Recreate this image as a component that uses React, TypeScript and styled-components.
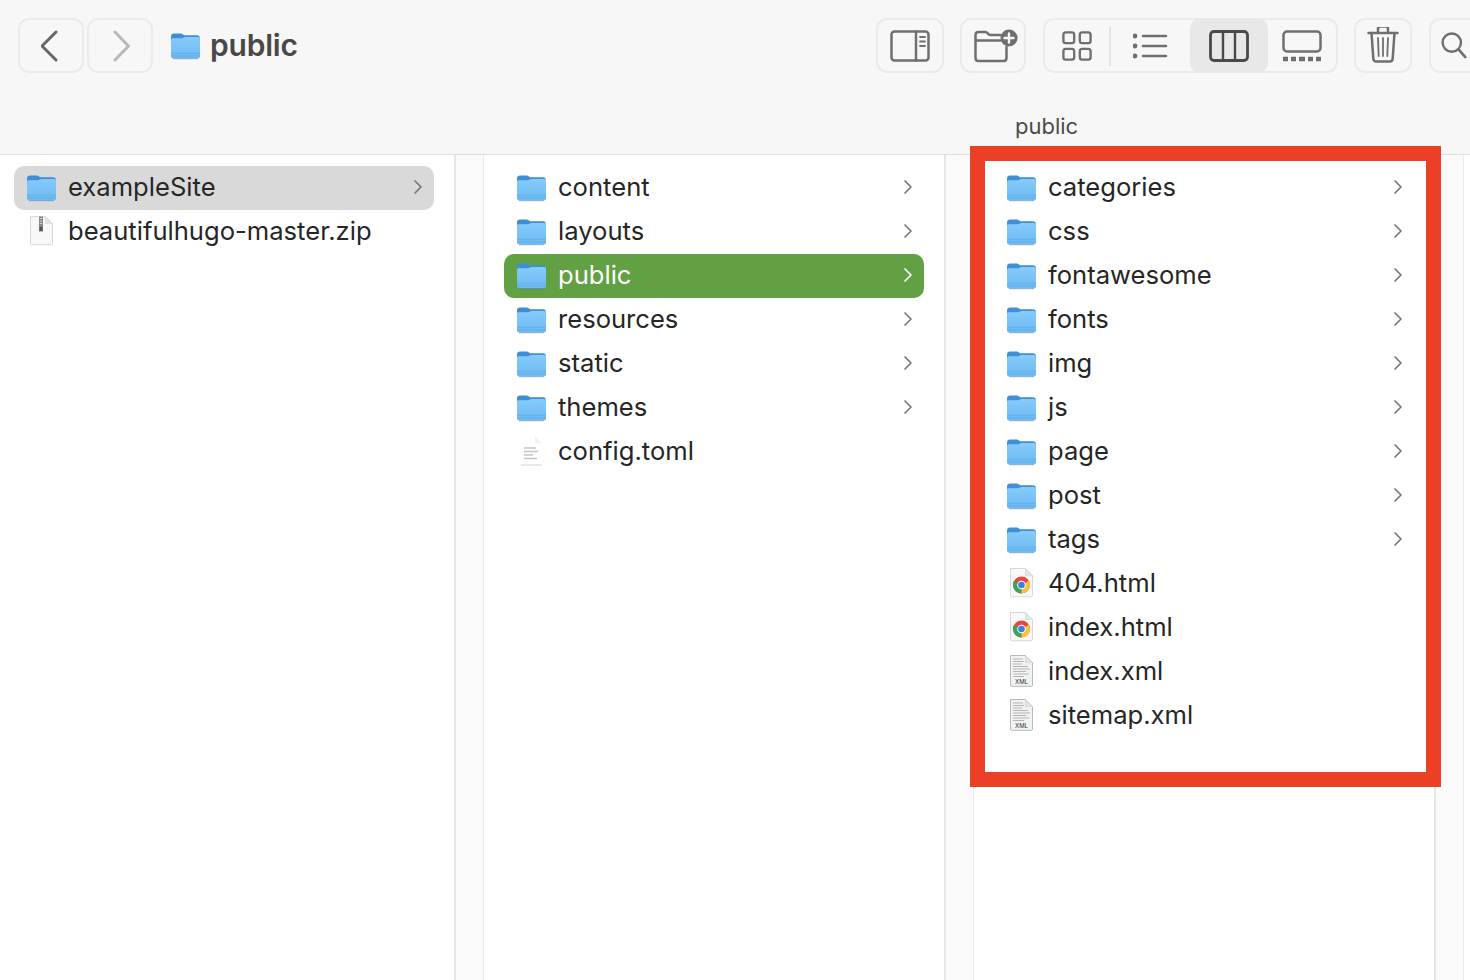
import React from "react";
import styled, { createGlobalStyle } from "styled-components";

const GlobalStyle = createGlobalStyle`
	html, body {
		margin: 0;
		padding: 0;
		background: #fff;
		overflow: hidden;
	}
	#root {
		height: 980px;
	}
`;

const Window = styled.div`
	position: relative;
	width: 1470px;
	height: 980px;
	overflow: hidden;
	display: flex;
	flex-direction: column;
	font-family: Inter, "Liberation Sans", sans-serif;
	color: #262626;
`;

const Toolbar = styled.header`
	height: 155px;
	flex: none;
	box-sizing: border-box;
	background: #f7f7f7;
	border-bottom: 1px solid #dedede;
	display: flex;
	flex-direction: column;
	overflow: hidden;
`;

const ToolRow = styled.div`
	display: flex;
	align-items: center;
	width: 1490px;
	box-sizing: border-box;
	height: 55px;
	margin-top: 18px;
	padding-left: 18px;
`;

const ToolButton = styled.div<{ $w: number; $gap?: number }>`
	width: ${(p) => p.$w}px;
	height: 55px;
	flex: none;
	box-sizing: border-box;
	border: 2px solid #ebebeb;
	border-radius: 11px;
	display: flex;
	align-items: center;
	justify-content: center;
	margin-left: ${(p) => p.$gap ?? 0}px;
`;

const ViewGroup = styled.div`
	width: 295px;
	height: 55px;
	flex: none;
	box-sizing: border-box;
	border: 2px solid #ebebeb;
	border-radius: 11px;
	margin-left: 17px;
	display: flex;
	align-items: center;
`;

const ViewItem = styled.div<{ $w: number; $active?: boolean }>`
	width: ${(p) => p.$w}px;
	height: 55px;
	flex: none;
	display: flex;
	align-items: center;
	justify-content: center;
	border-radius: 11px;
	background: ${(p) => (p.$active ? "#e8e8e8" : "transparent")};
`;

const ViewDivider = styled.span`
	width: 2px;
	height: 40px;
	flex: none;
	background: #e6e6e6;
`;

const TitleIcon = styled.div`
	margin-left: 17px;
	display: flex;
`;

const Title = styled.h1`
	margin: 0 0 2px 9px;
	font-size: 30px;
	font-weight: 600;
	color: #484848;
	letter-spacing: -0.2px;
`;

const Spacer = styled.div`
	flex: 1;
`;

const PathLabel = styled.div`
	margin-top: 38px;
	padding-left: 1015px;
	font-size: 22px;
	line-height: 30px;
	color: #4b4b4b;
`;

const Browser = styled.main`
	flex: 1;
	display: flex;
	min-height: 0;
`;

const Column = styled.section<{ $w: number; $pad: number }>`
	width: ${(p) => p.$w}px;
	flex: none;
	padding: 11px 0 0 ${(p) => p.$pad}px;
	background: #fff;
`;

const Gutter = styled.div`
	width: 30px;
	flex: none;
	box-sizing: border-box;
	background: #fafafa;
	border-left: 2px solid #e6e6e6;
	border-right: 1px solid #e9e9e9;
`;

const Row = styled.div<{ $state?: "active" | "muted" }>`
	width: 420px;
	height: 44px;
	box-sizing: border-box;
	padding: 0 11px 2px 12px;
	display: flex;
	align-items: center;
	border-radius: 10px;
	background: ${(p) =>
		p.$state === "active" ? "#62a044" : p.$state === "muted" ? "#d9d9d9" : "transparent"};
	color: ${(p) => (p.$state === "active" ? "#fff" : "#262626")};
`;

const RowIcon = styled.span`
	width: 30px;
	height: 32px;
	flex: none;
	display: flex;
	align-items: center;
	justify-content: center;
	svg {
		flex: none;
	}
`;

const RowLabel = styled.span`
	margin: 0 0 2px 12px;
	flex: 1;
	font-size: 25.6px;
	white-space: nowrap;
`;

const Highlight = styled.div`
	position: absolute;
	left: 970px;
	top: 146px;
	width: 471px;
	height: 641px;
	box-sizing: border-box;
	border: 15px solid #ec4026;
	pointer-events: none;
`;

const Chevron = ({ color = "#777" }: { color?: string }) => (
	<svg width="10" height="16" viewBox="0 0 10 16" fill="none">
		<path d="M2 2l6 6-6 6" stroke={color} strokeWidth="1.7" strokeLinecap="round" strokeLinejoin="round" />
	</svg>
);

const FolderIcon = ({ uid }: { uid: string }) => (
	<svg width="31" height="29" viewBox="0 0 30 28">
		<defs>
			<linearGradient id={uid} x1="0" y1="0" x2="0" y2="1">
				<stop offset="0" stopColor="#86cbfa" />
				<stop offset="1" stopColor="#6cb9f3" />
			</linearGradient>
		</defs>
		<path d="M1 5.500C1 3.500 2 2.500 4 2.500h6.500c1.400 0 2 1.500 3.500 1.500H26c2 0 3 1 3 3v6H1z" fill="#3f8ed6" />
		<path d="M1 8.500c0-.8.6-1.500 1.500-1.500h9c1.500 0 2.300-1.200 3.500-1.200h12.500c.9 0 1.500.7 1.500 1.500V24.500c0 1.400-.8 2-2 2H3c-1.200 0-2-.6-2-2z" fill={`url(#${uid})`} />
		<path d="M1 21.500h28M1 24h28" stroke="#5aa5e0" strokeWidth="0.8" opacity="0.7" />
		<path d="M3 26.800h24" stroke="#3f78ad" strokeWidth="0.8" opacity="0.6" />
	</svg>
);

const PageShape = () => (
	<>
		<path d="M2.500 1.500h15l7 7v20c0 .8-.5 1.300-1.300 1.300H3.800c-.8 0-1.300-.5-1.300-1.300z" fill="#f8f8f8" stroke="#d4d4d4" strokeWidth="0.9" />
		<path d="M17.500 1.500v7h7z" fill="#e6e6e6" stroke="#d4d4d4" strokeWidth="0.6" />
	</>
);

const ZipIcon = () => (
	<svg width="27" height="32" viewBox="0 0 27 32">
		<PageShape />
		<rect x="11" y="1.500" width="4" height="15" fill="#858585" />
		<path d="M11.800 3.500h2.400M11.800 6h2.400M11.800 8.500h2.400" stroke="#ddd" strokeWidth="0.9" />
		<rect x="11.500" y="12" width="3" height="4" fill="#555" />
	</svg>
);

const TomlIcon = () => (
	<svg width="27" height="32" viewBox="0 0 27 32">
		<path d="M3 1.500h14l7 7v20.800H3z" fill="#fff" />
		<path d="M17 1.500v7h7z" fill="#f1f1f1" />
		<path d="M6 13h12M6 16.500h14M6 20h9M6 23.500h13" stroke="#c4c4c4" strokeWidth="1.300" />
		<path d="M3 30h21" stroke="#d4d4d4" strokeWidth="1" />
	</svg>
);

const ChromeIcon = () => (
	<svg width="27" height="32" viewBox="0 0 27 32">
		<PageShape />
		<circle cx="13.500" cy="18" r="8.500" fill="#e8483b" />
		<path d="M13.500 18L6.100 13.800A8.500 8.500 0 0 0 13.500 26.500z" fill="#3aa655" />
		<path d="M13.500 18l0 8.500A8.500 8.500 0 0 0 20.900 13.800z" fill="#f6c342" />
		<circle cx="13.500" cy="18" r="4.300" fill="#fff" />
		<circle cx="13.500" cy="18" r="3.300" fill="#3f7fe0" />
	</svg>
);

const XmlIcon = () => (
	<svg width="27" height="34" viewBox="0 0 27 34">
		<path d="M2.500 1.500h15l7 7v22.500c0 .8-.5 1.300-1.300 1.300H3.800c-.8 0-1.300-.5-1.300-1.300z" fill="#f2f2f2" stroke="#b0b0b0" strokeWidth="0.9" />
		<path d="M17.500 1.500v7h7z" fill="#e2e2e2" stroke="#cfcfcf" strokeWidth="0.6" />
		<path d="M5 5h10M5 7.500h11M5 10h9M5 12.500h15M5 15h17M5 17.500h13M5 20h16M5 22.500h11" stroke="#b5b5b5" strokeWidth="1" />
		<text x="13.500" y="29.500" textAnchor="middle" fontSize="6" fontFamily="Inter, sans-serif" fill="#333">
			XML
		</text>
	</svg>
);

type Kind = "folder" | "zip" | "toml" | "chrome" | "xml";

type Entry = {
	name: string;
	kind: Kind;
	state?: "active" | "muted";
};

const iconFor = (entry: Entry, uid: string) => {
	if (entry.kind === "folder") return <FolderIcon uid={uid} />;
	if (entry.kind === "zip") return <ZipIcon />;
	if (entry.kind === "toml") return <TomlIcon />;
	if (entry.kind === "chrome") return <ChromeIcon />;
	return <XmlIcon />;
};

const folder = (name: string, state?: Entry["state"]): Entry => ({ name, kind: "folder", state });

const columns: { w: number; pad: number; entries: Entry[] }[] = [
	{
		w: 440,
		pad: 14,
		entries: [folder("exampleSite", "muted"), { name: "beautifulhugo-master.zip", kind: "zip" }],
	},
	{
		w: 440,
		pad: 20,
		entries: [
			folder("content"),
			folder("layouts"),
			folder("public", "active"),
			folder("resources"),
			folder("static"),
			folder("themes"),
			{ name: "config.toml", kind: "toml" },
		],
	},
	{
		w: 440,
		pad: 20,
		entries: [
			folder("categories"),
			folder("css"),
			folder("fontawesome"),
			folder("fonts"),
			folder("img"),
			folder("js"),
			folder("page"),
			folder("post"),
			folder("tags"),
			{ name: "404.html", kind: "chrome" },
			{ name: "index.html", kind: "chrome" },
			{ name: "index.xml", kind: "xml" },
			{ name: "sitemap.xml", kind: "xml" },
		],
	},
];

const line = { fill: "none", stroke: "#6f6f6f", strokeWidth: 2.5, strokeLinecap: "round", strokeLinejoin: "round" } as const;

const SidebarIcon = () => (
	<svg width="40" height="32" viewBox="0 0 40 32">
		<rect x="1.500" y="1.500" width="37" height="29" rx="3" {...line} />
		<path d="M26 1.500v29" {...line} />
		<path d="M30 7h5M30 11.500h5M30 16h5" {...line} strokeWidth="1.800" />
	</svg>
);

const NewFolderIcon = () => (
	<svg width="50" height="34" viewBox="-6 0 50 34">
		<path d="M1.500 6c0-2 1-3 3-3h7c2 0 2.500 3 5 3h10M1.500 11.500h25M1.500 6v23c0 2 1 3 3 3h25c2 0 3-1 3-3V18" {...line} />
		<circle cx="35" cy="9" r="8.500" fill="#6f6f6f" />
		<path d="M35 4.500v9M30.500 9h9" stroke="#f7f7f7" strokeWidth="2.400" strokeLinecap="round" />
	</svg>
);

const GridIcon = () => (
	<svg width="30" height="30" viewBox="0 0 32 32">
		<rect x="1.500" y="1.500" width="11.500" height="11.500" rx="2.500" {...line} />
		<rect x="19" y="1.500" width="11.500" height="11.500" rx="2.500" {...line} />
		<rect x="1.500" y="19" width="11.500" height="11.500" rx="2.500" {...line} />
		<rect x="19" y="19" width="11.500" height="11.500" rx="2.500" {...line} />
	</svg>
);

const ListIcon = () => (
	<svg width="36" height="26" viewBox="1 0 36 26">
		<circle cx="3" cy="3" r="2.400" fill="#6f6f6f" />
		<circle cx="3" cy="13" r="2.400" fill="#6f6f6f" />
		<circle cx="3" cy="23" r="2.400" fill="#6f6f6f" />
		<path d="M11 3h23M11 13h23M11 23h23" {...line} />
	</svg>
);

const ColumnsIcon = () => (
	<svg width="40" height="32" viewBox="0 0 40 32">
		<rect x="1.500" y="1.500" width="37" height="29" rx="3.500" fill="none" stroke="#4a4a4a" strokeWidth="2.800" />
		<path d="M14 1.500v29M26 1.500v29" stroke="#4a4a4a" strokeWidth="2.400" />
	</svg>
);

const GalleryIcon = () => (
	<svg width="44" height="32" viewBox="-2 0 44 32">
		<rect x="1.500" y="1.500" width="37" height="20" rx="3.500" {...line} />
		<path d="M1 29h5M9 29h5M17 29h6M26 29h5M34 29h5" stroke="#6f6f6f" strokeWidth="4.500" />
	</svg>
);

const TrashIcon = () => (
	<svg width="32" height="38" viewBox="0 2 32 38">
		<path d="M1.500 8h29M11 8V4c0-1.500.8-2.500 2.500-2.500h5C20.200 1.500 21 2.500 21 4v4" {...line} />
		<path d="M4.500 8l1.800 25.500c.1 2 1.300 3 3 3h13.400c1.700 0 2.900-1 3-3L27.500 8" {...line} />
		<path d="M11 13l.7 18M16 13v18M21 13l-.7 18" {...line} strokeWidth="1.800" />
	</svg>
);

const SearchIcon = () => (
	<svg width="37" height="27" viewBox="0 0 38 28">
		<circle cx="11" cy="11" r="9.500" {...line} />
		<path d="M18 18l7 8" {...line} strokeWidth="2.800" />
	</svg>
);

const App = () => {
	return (
		<Window>
			<GlobalStyle />
			<Toolbar>
				<ToolRow>
					<ToolButton $w={66}>
						<svg width="20" height="32" viewBox="0 0 20 32" fill="none">
							<path d="M15 2L1 16l14 14" stroke="#666" strokeWidth="3" strokeLinecap="round" strokeLinejoin="round" />
						</svg>
					</ToolButton>
					<ToolButton $w={66} $gap={3}>
						<svg width="20" height="32" viewBox="0 0 20 32" fill="none">
							<path d="M5 2l13.500 14L5 30" stroke="#b8b8b8" strokeWidth="3" strokeLinecap="round" strokeLinejoin="round" />
						</svg>
					</ToolButton>
					<TitleIcon>
						<FolderIcon uid="title-folder" />
					</TitleIcon>
					<Title>public</Title>
					<Spacer />
					<ToolButton $w={68}>
						<SidebarIcon />
					</ToolButton>
					<ToolButton $w={66} $gap={16}>
						<NewFolderIcon />
					</ToolButton>
					<ViewGroup>
						<ViewItem $w={64}>
							<GridIcon />
						</ViewItem>
						<ViewDivider />
						<ViewItem $w={79}>
							<ListIcon />
						</ViewItem>
						<ViewItem $w={78} $active>
							<ColumnsIcon />
						</ViewItem>
						<ViewItem $w={68}>
							<GalleryIcon />
						</ViewItem>
					</ViewGroup>
					<ToolButton $w={58} $gap={16}>
						<TrashIcon />
					</ToolButton>
					<ToolButton $w={61} $gap={17}>
						<SearchIcon />
					</ToolButton>
				</ToolRow>
				<PathLabel>public</PathLabel>
			</Toolbar>
			<Browser>
				{columns.map((col, c) => (
					<React.Fragment key={c}>
						<Column $w={col.w} $pad={col.pad}>
							{col.entries.map((entry, i) => (
								<Row key={entry.name} $state={entry.state}>
									<RowIcon>{iconFor(entry, `folder-${c}-${i}`)}</RowIcon>
									<RowLabel>{entry.name}</RowLabel>
									{entry.kind === "folder" && <Chevron color={entry.state === "active" ? "#fff" : "#777"} />}
								</Row>
							))}
						</Column>
						<Gutter />
					</React.Fragment>
				))}
			</Browser>
			<Highlight />
		</Window>
	);
};

export default App;
